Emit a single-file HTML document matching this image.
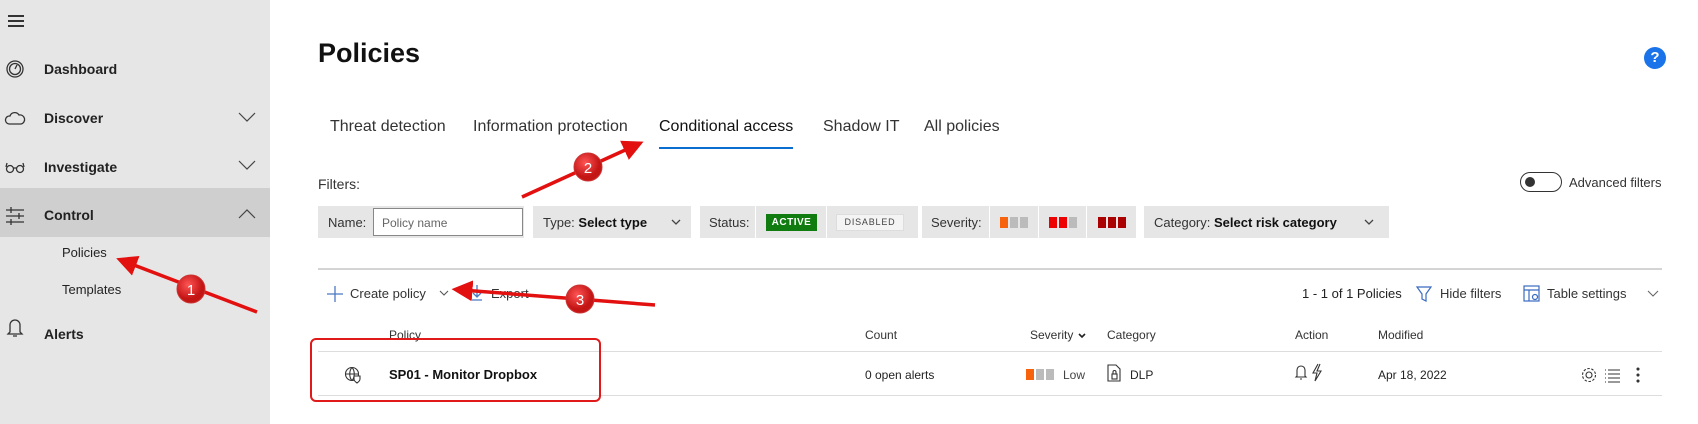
<!DOCTYPE html>
<html><head><meta charset="utf-8"><style>
*{margin:0;padding:0;box-sizing:border-box}
body{width:1698px;height:424px;overflow:hidden;background:#fff;font-family:"Liberation Sans",sans-serif;color:#222;position:relative;font-size:14px}
.a{position:absolute;white-space:nowrap}
.sb{position:absolute;left:0;top:0;width:270px;height:424px;background:#e6e6e6}
.nav{font-size:14px;font-weight:bold;color:#222}
.seg{position:absolute;top:206px;height:32px;background:#e6e6e6}
.tab{font-size:16px;color:#333;top:118px}
.hdr{font-size:12px;color:#333;top:328px}
.cell{font-size:12px;color:#222;top:368px}
.chev{position:absolute}
</style></head><body>
<div class="sb"></div>
<div class="a" style="left:0;top:188px;width:270px;height:49px;background:#cfcfcf"></div>
<div class="a" style="left:8px;top:15px;width:16px;height:1.5px;background:#333;box-shadow:0 5px 0 #333,0 10px 0 #333"></div>
<svg class="a" style="left:4px;top:58px" width="22" height="300" fill="none" stroke="#333" stroke-width="1.3">
<circle cx="11" cy="11" r="8"/><circle cx="11" cy="11" r="5.5"/><path d="M11 11l2-4"/>
<path d="M5 66a4 4 0 0 1 1-8 5 5 0 0 1 9-1 4 4 0 0 1 2 9z"/>
<circle cx="6" cy="111" r="3.5"/><circle cx="16" cy="111" r="3.5"/><path d="M9.5 110h3M2 109l1-4M20 109l-1-4"/>
<path d="M2 152h18M2 158h18M2 164h18M7 149v6M15 155v6M7 161v6"/>
<path d="M6 267a5 5 0 0 1 10 0v7l2 2H4l2-2z M9 278h4"/>
</svg>
<div class="a nav" style="left:44px;top:61px">Dashboard</div>
<div class="a nav" style="left:44px;top:110px">Discover</div>
<div class="a nav" style="left:44px;top:159px">Investigate</div>
<div class="a nav" style="left:44px;top:207px">Control</div>
<div class="a" style="left:62px;top:245px;font-size:13px">Policies</div>
<div class="a" style="left:62px;top:282px;font-size:13px">Templates</div>
<div class="a nav" style="left:44px;top:326px">Alerts</div>
<svg class="a" style="left:237px;top:110px" width="20" height="110" fill="none" stroke="#444" stroke-width="1.2"><path d="M2 3l8 8 8-8M2 51l8 8 8-8M2 108l8-8 8 8"/></svg>

<div class="a" style="left:318px;top:38px;font-size:27px;font-weight:bold;color:#111">Policies</div>
<div class="a" style="left:1644px;top:47px;width:22px;height:22px;border-radius:50%;background:#1a73e8;color:#fff;font-weight:bold;font-size:15px;text-align:center;line-height:22px">?</div>

<div class="a tab" style="left:330px">Threat detection</div>
<div class="a tab" style="left:473px">Information protection</div>
<div class="a tab" style="left:659px;color:#111">Conditional access</div>
<div class="a" style="left:659px;top:147px;width:134px;height:2px;background:#0a6ed1"></div>
<div class="a tab" style="left:823px">Shadow IT</div>
<div class="a tab" style="left:924px">All policies</div>

<div class="a" style="left:318px;top:176px;font-size:14px;color:#333">Filters:</div>
<div class="a" style="left:1520px;top:172px;width:42px;height:20px;border:1.5px solid #333;border-radius:10px"><div style="position:absolute;left:4px;top:4px;width:10px;height:10px;border-radius:50%;background:#333"></div></div>
<div class="a" style="left:1569px;top:175px;font-size:13px;color:#333">Advanced filters</div>

<div class="seg" style="left:318px;width:206px"></div>
<div class="a" style="left:328px;top:215px;font-size:13px;color:#333">Name:</div>
<div class="a" style="left:373px;top:208px;width:150px;height:28px;background:#fff;border:1px solid #888;font-size:12px;color:#666;padding:7px 8px">Policy name</div>
<div class="seg" style="left:533px;width:158px"></div>
<div class="a" style="left:543px;top:215px;font-size:13px;color:#333">Type: <b style="color:#111">Select type</b></div>
<svg class="chev" style="left:671px;top:219px" width="10" height="7" fill="none" stroke="#444" stroke-width="1.3"><path d="M1 1l4 4 4-4"/></svg>
<div class="seg" style="left:700px;width:218px"></div>
<div class="a" style="left:709px;top:215px;font-size:13px;color:#333">Status:</div>
<div class="a" style="left:755px;top:206px;width:1px;height:32px;background:#fff"></div>
<div class="a" style="left:766px;top:214px;width:51px;height:17px;background:#107c10;color:#fff;font-size:10px;font-weight:bold;text-align:center;line-height:17px;letter-spacing:.5px">ACTIVE</div>
<div class="a" style="left:826px;top:206px;width:1px;height:32px;background:#fff"></div>
<div class="a" style="left:836px;top:214px;width:68px;height:17px;background:#f4f4f4;border:1px solid #ddd;color:#444;font-size:9px;text-align:center;line-height:15px;letter-spacing:.8px">DISABLED</div>
<div class="seg" style="left:922px;width:214px"></div>
<div class="a" style="left:931px;top:215px;font-size:13px;color:#333">Severity:</div>
<div class="a" style="left:989px;top:206px;width:1px;height:32px;background:#fff"></div>
<div class="a" style="left:1038px;top:206px;width:1px;height:32px;background:#fff"></div>
<div class="a" style="left:1086px;top:206px;width:1px;height:32px;background:#fff"></div>
<div class="a" style="left:1000px;top:217px;width:8px;height:11px;background:#f7630c;box-shadow:10px 0 #bbb,20px 0 #bbb"></div>
<div class="a" style="left:1049px;top:217px;width:8px;height:11px;background:#e00;box-shadow:10px 0 #e00,20px 0 #bbb"></div>
<div class="a" style="left:1098px;top:217px;width:8px;height:11px;background:#a00;box-shadow:10px 0 #a00,20px 0 #a00"></div>
<div class="seg" style="left:1144px;width:245px"></div>
<div class="a" style="left:1154px;top:215px;font-size:13px;color:#333">Category: <b style="color:#111">Select risk category</b></div>
<svg class="chev" style="left:1364px;top:219px" width="10" height="7" fill="none" stroke="#444" stroke-width="1.3"><path d="M1 1l4 4 4-4"/></svg>

<div class="a" style="left:318px;top:268px;width:1344px;height:2px;background:#d4d4d4"></div>
<svg class="a" style="left:326px;top:285px" width="18" height="18" stroke="#4a78c2" stroke-width="1.3"><path d="M9 1v16M1 9h16"/></svg>
<div class="a" style="left:350px;top:286px;font-size:13px;color:#333">Create policy</div>
<svg class="chev" style="left:439px;top:290px" width="10" height="7" fill="none" stroke="#555" stroke-width="1.1"><path d="M1 1l4 4 4-4"/></svg>
<svg class="a" style="left:470px;top:284px" width="14" height="18" stroke="#4a78c2" stroke-width="1.3" fill="none"><path d="M7 1v12M3 9l4 4 4-4M2 16h10"/></svg>
<div class="a" style="left:491px;top:286px;font-size:13px;color:#333">Export</div>

<div class="a" style="left:1302px;top:286px;font-size:13px;color:#222">1 - 1 of 1 Policies</div>
<svg class="a" style="left:1416px;top:285px" width="16" height="18" fill="none" stroke="#3a6bc0" stroke-width="1.2"><path d="M1 2h14l-5 7v7l-4-2V9z"/></svg>
<div class="a" style="left:1440px;top:286px;font-size:13px;color:#333">Hide filters</div>
<svg class="a" style="left:1523px;top:285px" width="18" height="18" fill="none" stroke="#3a6bc0" stroke-width="1.2"><rect x="1" y="1" width="15" height="15"/><path d="M1 5h15M6 5v11"/><circle cx="12" cy="12" r="2.5"/></svg>
<div class="a" style="left:1547px;top:286px;font-size:13px;color:#333">Table settings</div>
<svg class="chev" style="left:1647px;top:290px" width="12" height="8" fill="none" stroke="#666" stroke-width="1.1"><path d="M1 1l5 5 5-5"/></svg>

<div class="a hdr" style="left:389px">Policy</div>
<div class="a hdr" style="left:865px">Count</div>
<div class="a hdr" style="left:1030px">Severity</div>
<svg class="chev" style="left:1078px;top:333px" width="8" height="6" fill="none" stroke="#222" stroke-width="1.6"><path d="M1 1l3 3 3-3"/></svg>
<div class="a hdr" style="left:1107px">Category</div>
<div class="a hdr" style="left:1295px">Action</div>
<div class="a hdr" style="left:1378px">Modified</div>
<div class="a" style="left:318px;top:351px;width:1344px;height:1px;background:#ddd"></div>
<div class="a" style="left:318px;top:395px;width:1344px;height:1px;background:#ddd"></div>

<svg class="a" style="left:344px;top:366px" width="18" height="18" fill="none" stroke="#333" stroke-width="1.1"><circle cx="8" cy="8" r="6.5"/><path d="M1.5 8h13M8 1.5c-3 3-3 10 0 13M8 1.5c3 3 3 10 0 13"/><path d="M10 10h6v3c0 2-3 4-3 4s-3-2-3-4z" fill="#fff"/></svg>
<div class="a" style="left:389px;top:367px;font-size:13px;font-weight:bold;color:#111">SP01 - Monitor Dropbox</div>
<div class="a cell" style="left:865px">0 open alerts</div>
<div class="a" style="left:1026px;top:369px;width:8px;height:11px;background:#f7630c;box-shadow:10px 0 #bbb,20px 0 #bbb"></div>
<div class="a cell" style="left:1063px;color:#444">Low</div>
<svg class="a" style="left:1107px;top:364px" width="14" height="18" fill="none" stroke="#333" stroke-width="1.1"><path d="M1 1h8l4 4v12H1z"/><rect x="5" y="10" width="5" height="5"/><path d="M6 10V8a1.5 1.5 0 0 1 3 0v2"/></svg>
<div class="a cell" style="left:1130px">DLP</div>
<svg class="a" style="left:1294px;top:363px" width="32" height="20" fill="none" stroke="#333" stroke-width="1.1"><path d="M3 13V7a4 4 0 0 1 8 0v6l1 1H2zM6 16h2"/><path d="M24 1l-5 9h4l-2 8 6-10h-4l3-7"/></svg>
<div class="a cell" style="left:1378px">Apr 18, 2022</div>
<svg class="a" style="left:1580px;top:366px" width="80" height="20" fill="none" stroke="#333" stroke-width="1.1"><circle cx="9" cy="9" r="3"/><circle cx="9" cy="9" r="6.5" stroke-dasharray="2.5 1.6"/><path d="M28 4h12M28 8h12M28 12h12M28 16h12M25 4h1M25 8h1M25 12h1M25 16h1"/><circle cx="58" cy="3" r="1" fill="#333"/><circle cx="58" cy="9" r="1" fill="#333"/><circle cx="58" cy="15" r="1" fill="#333"/></svg>

<div class="a" style="left:310px;top:338px;width:291px;height:64px;border:2px solid #e01a1a;border-radius:6px"></div>
<svg class="a" style="left:0;top:0" width="1698" height="424">
<defs><marker id="m" markerWidth="6" markerHeight="6" refX="3" refY="3" orient="auto"><path d="M0 0L6 3L0 6z" fill="#e31010"/></marker>
<radialGradient id="g" cx="40%" cy="35%"><stop offset="0" stop-color="#f55"/><stop offset="1" stop-color="#c41515"/></radialGradient></defs>
<g stroke="#e31010" stroke-width="3.5" marker-end="url(#m)">
<path d="M257 312L126 262"/><path d="M522 197L634 146"/><path d="M655 305L462 290"/></g>
<g font-family="Liberation Sans" font-size="15" fill="#fff" text-anchor="middle">
<circle cx="191" cy="289" r="14" fill="url(#g)" stroke="#c33"/><text x="191" y="295">1</text>
<circle cx="588" cy="167" r="14" fill="url(#g)" stroke="#c33"/><text x="588" y="173">2</text>
<circle cx="580" cy="299" r="14" fill="url(#g)" stroke="#c33"/><text x="580" y="305">3</text></g>
</svg>
</body></html>
